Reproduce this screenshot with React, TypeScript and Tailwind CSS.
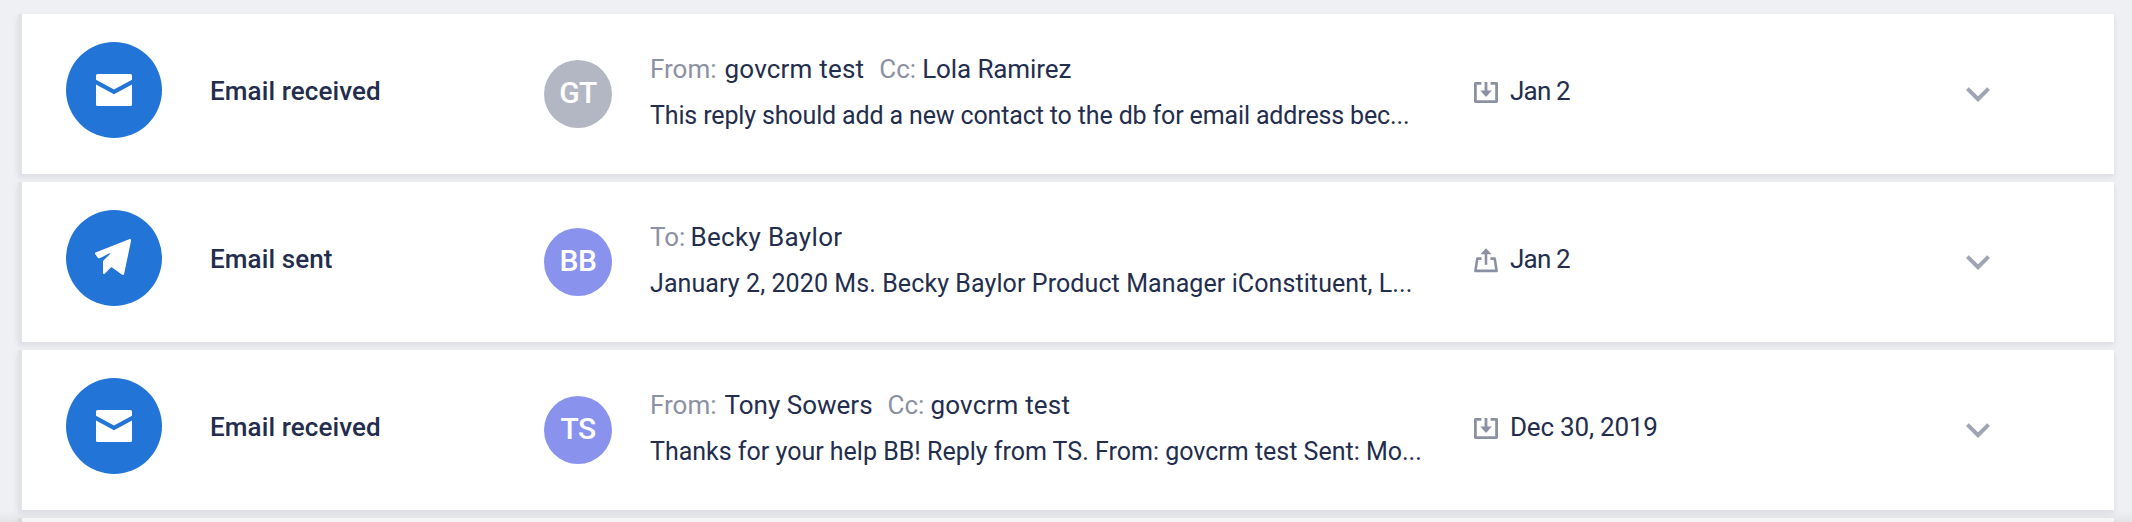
import { clsx } from "clsx";

type Party = { label: string; name: string; nameClass: string };

type Activity = {
  kind: "received" | "sent";
  initials: string;
  avatarClass: string;
  parties: Party[];
  preview: string;
  previewClass: string;
  date: string;
  dateClass: string;
};

const activities: Activity[] = [
  {
    kind: "received",
    initials: "GT",
    avatarClass: "bg-[#b3b7c3]",
    parties: [
      { label: "From:", name: "govcrm test", nameClass: "ml-2 tracking-[0.2px]" },
      { label: "Cc:", name: "Lola Ramirez", nameClass: "ml-1.5 tracking-[-0.1px]" },
    ],
    preview: "This reply should add a new contact to the db for email address bec...",
    previewClass: "tracking-[-0.14px]",
    date: "Jan 2",
    dateClass: "tracking-[-0.8px]",
  },
  {
    kind: "sent",
    initials: "BB",
    avatarClass: "bg-[#8993ee]",
    parties: [{ label: "To:", name: "Becky Baylor", nameClass: "ml-[5px] tracking-[0.35px]" }],
    preview: "January 2, 2020 Ms. Becky Baylor Product Manager iConstituent, L...",
    previewClass: "tracking-[0.09px]",
    date: "Jan 2",
    dateClass: "tracking-[-0.8px]",
  },
  {
    kind: "received",
    initials: "TS",
    avatarClass: "bg-[#8993ee]",
    parties: [
      { label: "From:", name: "Tony Sowers", nameClass: "ml-2" },
      { label: "Cc:", name: "govcrm test", nameClass: "ml-1.5 tracking-[0.2px]" },
    ],
    preview: "Thanks for your help BB! Reply from TS. From: govcrm test Sent: Mo...",
    previewClass: "tracking-normal",
    date: "Dec 30, 2019",
    dateClass: "tracking-[-0.2px]",
  },
];

function MailIcon() {
  return (
    <svg viewBox="0 0 36 32" className="h-8 w-9" fill="#fff">
      <path d="M1.5 0h33A1.5 1.5 0 0 1 36 1.5v4.2L18 15.4 0 5.7V1.5A1.5 1.5 0 0 1 1.5 0z" />
      <path d="M0 10.5 18 20.2 36 10.5v20a1.5 1.5 0 0 1-1.5 1.5h-33A1.5 1.5 0 0 1 0 30.5z" />
    </svg>
  );
}

function PlaneIcon() {
  return (
    <svg viewBox="0 0 96 96" className="size-24" fill="#fff">
      <path d="M63.8 29.1 29.6 42.6q-1 .5-.4 1.5l2.6 3.6q.8 1 2 .5l9.4-4.8q2-.7.9.6l-6.4 6.2q-.7.7-.7 1.8v10.6q0 2.3 1.8 1.1l6-6.1q.6-.5 1.3 0l9.7 7q1.8 1.2 2.3-.6l6.9-33.1q.2-2-1.2-1.8z" />
    </svg>
  );
}

function DownloadIcon() {
  return (
    <svg viewBox="0 0 24 26" className="h-[26px] w-6" fill="none" stroke="#8b91a3" strokeWidth="2.8">
      <path d="M7.4 3.4h-6v18.2h21.2V3.4h-6" strokeLinejoin="round" />
      <path d="M12 2v10" />
      <path d="M6.2 10.6h11.6L12 17z" fill="#8b91a3" stroke="none" />
    </svg>
  );
}

function UploadIcon() {
  return (
    <svg viewBox="0 0 24 26" className="h-[26px] w-6" fill="none" stroke="#8b91a3" strokeWidth="2.6">
      <path d="M7.6 10.6H3.3L1.4 22.9h21.2l-1.9-12.3h-4.3" strokeLinejoin="round" />
      <path d="M12 5v11.8" />
      <path d="M6.4 6.2h11.2L12 .2z" fill="#8b91a3" stroke="none" />
    </svg>
  );
}

function ActivityRow({ activity }: { activity: Activity }) {
  const received = activity.kind === "received";
  return (
    <li className="flex h-40 items-start border-l-4 border-[#e1e3e9] bg-white pl-11 shadow-[0_3px_6px_rgba(30,40,80,0.1)]">
      <div className="mt-7 flex size-24 shrink-0 items-center justify-center rounded-full bg-[#2275d7]">
        {received ? <MailIcon /> : <PlaneIcon />}
      </div>
      <h3 className="mt-[61px] ml-12 w-[334px] shrink-0 leading-8 font-medium tracking-[0.1px]">
        {received ? "Email received" : "Email sent"}
      </h3>
      <div
        className={clsx(
          "mt-[46px] flex size-[68px] shrink-0 items-center justify-center rounded-full text-[30px] leading-none font-medium tracking-[-0.5px] text-white",
          activity.avatarClass
        )}
      >
        <span className="-mt-0.5">{activity.initials}</span>
      </div>
      <div className="mt-[39px] ml-[38px] w-[824px] shrink-0 whitespace-nowrap">
        <p className="flex h-[47px] gap-[15px] leading-8">
          {activity.parties.map((p) => (
            <span key={p.label} className="flex">
              <span className="text-[#8b91a3]">{p.label}</span>
              <span className={p.nameClass}>{p.name}</span>
            </span>
          ))}
        </p>
        <p className={clsx("text-[25px] leading-8", activity.previewClass)}>{activity.preview}</p>
      </div>
      <div className="mt-[61px] flex w-[480px] shrink-0 gap-3">
        <span className="mt-[5px]">{received ? <DownloadIcon /> : <UploadIcon />}</span>
        <time className={clsx("leading-8", activity.dateClass)}>{activity.date}</time>
      </div>
      <button className="mt-14" aria-label="Expand">
        <svg viewBox="0 0 24 24" className="size-12" fill="#9fa5b5">
          <path d="M16.59 8.59 12 13.17 7.41 8.59 6 10l6 6 6-6z" />
        </svg>
      </button>
    </li>
  );
}

export default function App() {
  return (
    <main className="relative h-[522px] overflow-hidden bg-[#eff0f3] pt-3.5 pr-[18px] pl-[18px] font-['Roboto',sans-serif] text-[26px] text-[#232d4d]">
      <ul className="flex flex-col gap-2">
        {activities.map((a, i) => (
          <ActivityRow key={i} activity={a} />
        ))}
        <li className="h-40 border-l-4 border-[#e1e3e9] bg-white shadow-[0_3px_6px_rgba(30,40,80,0.1)]" />
      </ul>
      <div className="absolute inset-x-0 bottom-0 h-3 bg-linear-to-b from-transparent to-black/5" />
    </main>
  );
}
